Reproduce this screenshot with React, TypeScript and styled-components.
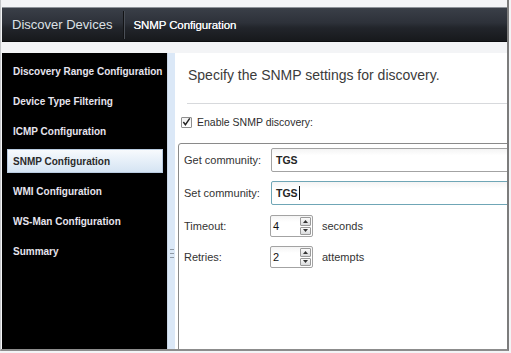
import React from 'react';
import styled, { createGlobalStyle } from 'styled-components';

const GlobalStyle = createGlobalStyle`
  html, body {
    margin: 0;
    padding: 0;
    background: #f3f4f6;
    overflow: hidden;
  }
  * {
    box-sizing: border-box;
  }
`;

const navItems = [
  'Discovery Range Configuration',
  'Device Type Filtering',
  'ICMP Configuration',
  'SNMP Configuration',
  'WMI Configuration',
  'WS-Man Configuration',
  'Summary',
];

const Shell = styled.div`
  width: 509px;
  height: 351px;
  padding: 7px 0 0 1px;
  border-left: 1px solid #c4c6c9;
  border-right: 2px solid #7c7c7c;
  border-bottom: 2px solid #8c8c8c;
  background: #f3f4f6;
  display: flex;
  flex-direction: column;
  font-family: 'Liberation Sans', Arial, sans-serif;
`;

const Header = styled.div`
  height: 35px;
  flex: none;
  display: flex;
  align-items: center;
  padding-left: 10px;
  border-top: 1px solid #8d9298;
  border-bottom: 1px solid #0d0e10;
  background: linear-gradient(#3a3f48, #2d3139 45%, #22252b 60%, #17191c);
`;

const HeaderTitle = styled.span`
  font-size: 13px;
  color: #dde1e6;
`;

const HeaderDivider = styled.span`
  width: 1px;
  height: 28px;
  margin: 0 9px 0 11px;
  background: #121315;
  box-shadow: 1px 0 0 #4a4f57;
`;

const HeaderStep = styled.span`
  font-size: 11.5px;
  color: #f4f5f7;
  letter-spacing: -0.1px;
  text-shadow: 0 0 0.3px #fff;
`;

const Body = styled.div`
  flex: 1;
  display: flex;
  margin-top: 11px;
  min-height: 0;
`;

const Sidebar = styled.div`
  width: 165px;
  flex: none;
  background: #000;
  padding: 6px 4px 0 5px;
  display: flex;
  flex-direction: column;
  gap: 6px;
`;

const NavItem = styled.div<{ $active?: boolean }>`
  height: 24px;
  display: flex;
  align-items: center;
  padding-left: 5px;
  font-size: 10px;
  font-weight: bold;
  white-space: nowrap;
  color: ${(p) => (p.$active ? '#2a2a2a' : '#e6e4ee')};
  border: 1px solid ${(p) => (p.$active ? '#b9cbe0' : 'transparent')};
  background: ${(p) =>
    p.$active ? 'linear-gradient(#f7fafd, #e6eff8 50%, #d5e4f3)' : 'transparent'};
`;

const Splitter = styled.div`
  width: 8px;
  flex: none;
  background: #dbe8f7;
  border-left: 1px solid #c9d6e6;
  display: flex;
  align-items: center;
  justify-content: center;
  padding-top: 104px;
`;

const Grip = styled.div`
  width: 4px;
  height: 9px;
  background: repeating-linear-gradient(#8e98a4 0 1px, transparent 1px 4px);
`;

const Content = styled.div`
  flex: 1;
  background: #fff;
  overflow: hidden;
  display: flex;
  flex-direction: column;
`;

const Heading = styled.div`
  margin: 14px 0 0 13px;
  font-size: 14px;
  line-height: 17px;
  color: #3b3b3b;
`;

const Separator = styled.div`
  height: 1px;
  margin: 19px 0 0 12px;
  background: #d7d9dc;
`;

const CheckRow = styled.label`
  display: flex;
  align-items: center;
  gap: 5px;
  height: 14px;
  margin: 11px 0 0 6px;
  font-size: 10.5px;
  color: #2e2e2e;
`;

const CheckBox = styled.span`
  width: 11px;
  height: 11px;
  border: 1px solid #8f8f8f;
  border-radius: 1px;
  background: linear-gradient(#f2f2f2, #ffffff);
  display: flex;
  align-items: center;
  justify-content: center;
`;

const GroupBox = styled.div`
  flex: 1;
  margin: 14px -8px -8px 3px;
  border: 1px solid #8a8a8a;
  border-radius: 3px;
  padding: 4px 0 0 5px;
  display: flex;
  flex-direction: column;
`;

const FieldRow = styled.div<{ $gap: number }>`
  display: flex;
  align-items: center;
  margin-top: ${(p) => p.$gap}px;
`;

const FieldLabel = styled.span`
  width: 87px;
  flex: none;
  font-size: 11px;
  color: #333;
`;

const TextInput = styled.div<{ $focused?: boolean }>`
  flex: 1;
  height: 24px;
  display: flex;
  align-items: center;
  padding-left: 4px;
  font-size: 10.5px;
  font-weight: bold;
  color: #262626;
  border: 1px solid ${(p) => (p.$focused ? '#6fa6b6' : '#a3a3a3')};
  border-radius: 2px;
  background: linear-gradient(#f4f4f4, #ffffff 30%);
`;

const Caret = styled.span`
  width: 1px;
  height: 14px;
  margin-left: 1px;
  background: #111;
`;

const SpinBox = styled.div`
  width: 43px;
  height: 22px;
  flex: none;
  display: flex;
  align-items: center;
  justify-content: space-between;
  padding: 0 1px 0 2px;
  margin-left: -1px;
  font-size: 11px;
  color: #111;
  border: 1px solid #a3a3a3;
  border-radius: 2px;
  background: linear-gradient(#f4f4f4, #ffffff 30%);
`;

const SpinButtons = styled.div`
  width: 11px;
  height: 18px;
  display: flex;
  flex-direction: column;
  gap: 1px;
`;

const SpinButton = styled.div`
  flex: 1;
  border: 1px solid #9a9a9a;
  border-radius: 1px;
  background: linear-gradient(#fbfbfb, #d9dadc);
  display: flex;
  align-items: center;
  justify-content: center;
`;

const Unit = styled.span`
  margin-left: 9px;
  font-size: 11px;
  color: #333;
`;

const Arrow = ({ up }: { up?: boolean }) => (
  <svg width="5" height="3" viewBox="0 0 5 3">
    <path d={up ? 'M0 3 L2.5 0 L5 3 Z' : 'M0 0 L2.5 3 L5 0 Z'} fill="#333" />
  </svg>
);

const Spinner = ({ value }: { value: string }) => (
  <SpinBox>
    <span>{value}</span>
    <SpinButtons>
      <SpinButton>
        <Arrow up />
      </SpinButton>
      <SpinButton>
        <Arrow />
      </SpinButton>
    </SpinButtons>
  </SpinBox>
);

export default function App() {
  return (
    <>
      <GlobalStyle />
      <Shell>
        <Header>
          <HeaderTitle>Discover Devices</HeaderTitle>
          <HeaderDivider />
          <HeaderStep>SNMP Configuration</HeaderStep>
        </Header>
        <Body>
          <Sidebar>
            {navItems.map((item) => (
              <NavItem key={item} $active={item === 'SNMP Configuration'}>
                {item}
              </NavItem>
            ))}
          </Sidebar>
          <Splitter>
            <Grip />
          </Splitter>
          <Content>
            <Heading>Specify the SNMP settings for discovery.</Heading>
            <Separator />
            <CheckRow>
              <CheckBox>
                <svg width="10" height="10" viewBox="0 0 10 10">
                  <path d="M1.5 5 L3.8 8 L8.6 1" fill="none" stroke="#222" strokeWidth="1.6" />
                </svg>
              </CheckBox>
              Enable SNMP discovery:
            </CheckRow>
            <GroupBox>
              <FieldRow $gap={0}>
                <FieldLabel>Get community:</FieldLabel>
                <TextInput>TGS</TextInput>
              </FieldRow>
              <FieldRow $gap={9}>
                <FieldLabel>Set community:</FieldLabel>
                <TextInput $focused>
                  TGS
                  <Caret />
                </TextInput>
              </FieldRow>
              <FieldRow $gap={10}>
                <FieldLabel>Timeout:</FieldLabel>
                <Spinner value="4" />
                <Unit>seconds</Unit>
              </FieldRow>
              <FieldRow $gap={9}>
                <FieldLabel>Retries:</FieldLabel>
                <Spinner value="2" />
                <Unit>attempts</Unit>
              </FieldRow>
            </GroupBox>
          </Content>
        </Body>
      </Shell>
    </>
  );
}
